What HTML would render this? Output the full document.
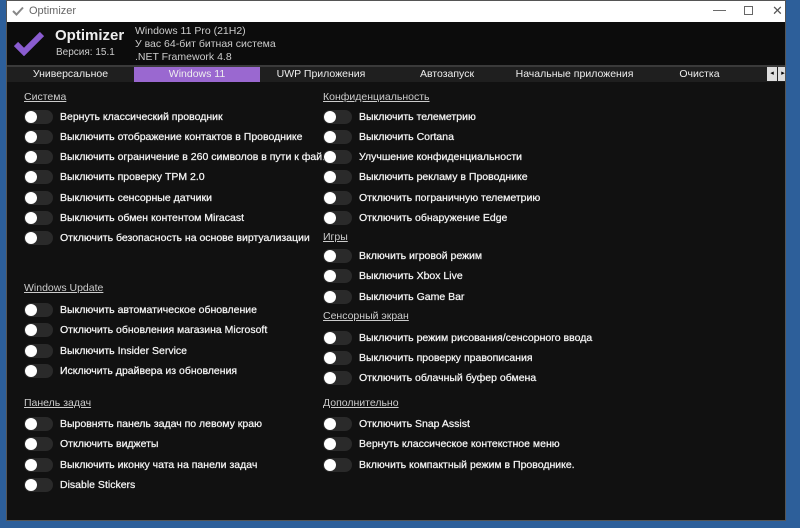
<!DOCTYPE html>
<html><head><meta charset="utf-8"><style>
*{margin:0;padding:0;box-sizing:border-box}
body{width:800px;height:528px;background:#2d5f9a;position:relative;overflow:hidden;font-family:"Liberation Sans","DejaVu Sans",sans-serif}
#win{position:absolute;left:6px;top:0;width:780px;height:521px;background:#111;border:1px solid #555;overflow:hidden}
#title{position:absolute;left:0;top:0;width:100%;height:21px;background:#fff;color:#666;font-size:11px}
#hdr{position:absolute;left:0;top:21px;width:100%;height:43px;background:#0c0c0c}
.t{position:absolute;color:#eee;white-space:nowrap}
#tabs{position:absolute;left:0;top:64px;width:100%;height:17px;background:#1f1f1f;border-top:2px solid #3a3a3a}
.tab{position:absolute;top:0;height:15px;line-height:14px;font-size:10.5px;color:#eee;text-align:center;white-space:nowrap}
.h{position:absolute;font-size:10.5px;color:#ccc;text-decoration:underline;white-space:nowrap}
.r{position:absolute;height:14px}
.r i{position:absolute;left:0;top:0;width:29px;height:14px;border-radius:7px;background:#2a2a2a}
.r b{position:absolute;left:1px;top:1px;width:12px;height:12px;border-radius:6px;background:#fff}
.r span{position:absolute;left:36px;top:0;line-height:14px;font-size:10.5px;color:#f4f4f4;white-space:nowrap;-webkit-text-stroke:0.25px #f4f4f4}
</style></head><body>
<div id="win">
<div id="title">
<svg style="position:absolute;left:5px;top:5px" width="12" height="10"><path d="M1 5 L4.5 8.5 L11 1.5" stroke="#888" stroke-width="2" fill="none"/></svg>
<span style="position:absolute;left:22px;top:4px">Optimizer</span>
<span style="position:absolute;left:706px;top:1px;font-size:13px;color:#555">—</span>
<span style="position:absolute;left:737px;top:5px;width:9px;height:9px;border:1px solid #666"></span>
<span style="position:absolute;left:765px;top:2px;font-size:13px;color:#555">✕</span>
</div>
<div id="hdr">
<svg style="position:absolute;left:6px;top:8px" width="32" height="26"><path d="M3 14 L11 22 L29 4" stroke="#8a5cd0" stroke-width="6" fill="none"/></svg>
<div class="t" style="left:48px;top:5px;font-size:15px;font-weight:bold">Optimizer</div>
<div class="t" style="left:49px;top:25px;font-size:10px;color:#ccc">Версия: 15.1</div>
<div class="t" style="left:128px;top:3px;font-size:10.5px;color:#ccc">Windows 11 Pro (21H2)</div>
<div class="t" style="left:128px;top:16px;font-size:10.5px;color:#ccc">У вас 64-бит битная система</div>
<div class="t" style="left:128px;top:29px;font-size:10.5px;color:#ccc">.NET Framework 4.8</div>
</div>
<div id="tabs">
<div class="tab" style="left:0;width:127px">Универсальное</div>
<div class="tab" style="left:127px;width:126px;background:#9a68d0">Windows 11</div>
<div class="tab" style="left:253px;width:122px">UWP Приложения</div>
<div class="tab" style="left:375px;width:130px">Автозапуск</div>
<div class="tab" style="left:505px;width:125px">Начальные приложения</div>
<div class="tab" style="left:630px;width:125px">Очистка</div>
<div style="position:absolute;left:760px;top:0;width:10px;height:14px;background:#ddd;font-size:7px;color:#000;text-align:center;line-height:14px">◂</div>
<div style="position:absolute;left:771px;top:0;width:10px;height:14px;background:#ddd;font-size:7px;color:#000;text-align:center;line-height:14px">▸</div>
</div>
<div class="h" style="left:17px;top:90px">Система</div>
<div class="r" style="left:17px;top:109px"><i></i><b></b><span>Вернуть классический проводник</span></div>
<div class="r" style="left:17px;top:129px"><i></i><b></b><span>Выключить отображение контактов в Проводнике</span></div>
<div class="r" style="left:17px;top:149px"><i></i><b></b><span>Выключить ограничение в 260 символов в пути к фай.</span></div>
<div class="r" style="left:17px;top:169px"><i></i><b></b><span>Выключить проверку TPM 2.0</span></div>
<div class="r" style="left:17px;top:190px"><i></i><b></b><span>Выключить сенсорные датчики</span></div>
<div class="r" style="left:17px;top:210px"><i></i><b></b><span>Выключить обмен контентом Miracast</span></div>
<div class="r" style="left:17px;top:230px"><i></i><b></b><span>Отключить безопасность на основе виртуализации</span></div>
<div class="h" style="left:17px;top:281px">Windows Update</div>
<div class="r" style="left:17px;top:302px"><i></i><b></b><span>Выключить автоматическое обновление</span></div>
<div class="r" style="left:17px;top:322px"><i></i><b></b><span>Отключить обновления магазина Microsoft</span></div>
<div class="r" style="left:17px;top:343px"><i></i><b></b><span>Выключить Insider Service</span></div>
<div class="r" style="left:17px;top:363px"><i></i><b></b><span>Исключить драйвера из обновления</span></div>
<div class="h" style="left:17px;top:396px">Панель задач</div>
<div class="r" style="left:17px;top:416px"><i></i><b></b><span>Выровнять панель задач по левому краю</span></div>
<div class="r" style="left:17px;top:436px"><i></i><b></b><span>Отключить виджеты</span></div>
<div class="r" style="left:17px;top:457px"><i></i><b></b><span>Выключить иконку чата на панели задач</span></div>
<div class="r" style="left:17px;top:477px"><i></i><b></b><span>Disable Stickers</span></div>

<div class="h" style="left:316px;top:90px">Конфиденциальность</div>
<div class="r" style="left:316px;top:109px"><i></i><b></b><span>Выключить телеметрию</span></div>
<div class="r" style="left:316px;top:129px"><i></i><b></b><span>Выключить Cortana</span></div>
<div class="r" style="left:316px;top:149px"><i></i><b></b><span>Улучшение конфиденциальности</span></div>
<div class="r" style="left:316px;top:169px"><i></i><b></b><span>Выключить рекламу в Проводнике</span></div>
<div class="r" style="left:316px;top:190px"><i></i><b></b><span>Отключить пограничную телеметрию</span></div>
<div class="r" style="left:316px;top:210px"><i></i><b></b><span>Отключить обнаружение Edge</span></div>
<div class="h" style="left:316px;top:230px">Игры</div>
<div class="r" style="left:316px;top:248px"><i></i><b></b><span>Включить игровой режим</span></div>
<div class="r" style="left:316px;top:268px"><i></i><b></b><span>Выключить Xbox Live</span></div>
<div class="r" style="left:316px;top:289px"><i></i><b></b><span>Выключить Game Bar</span></div>
<div class="h" style="left:316px;top:309px">Сенсорный экран</div>
<div class="r" style="left:316px;top:330px"><i></i><b></b><span>Выключить режим рисования/сенсорного ввода</span></div>
<div class="r" style="left:316px;top:350px"><i></i><b></b><span>Выключить проверку правописания</span></div>
<div class="r" style="left:316px;top:370px"><i></i><b></b><span>Отключить облачный буфер обмена</span></div>
<div class="h" style="left:316px;top:396px">Дополнительно</div>
<div class="r" style="left:316px;top:416px"><i></i><b></b><span>Отключить Snap Assist</span></div>
<div class="r" style="left:316px;top:436px"><i></i><b></b><span>Вернуть классическое контекстное меню</span></div>
<div class="r" style="left:316px;top:457px"><i></i><b></b><span>Включить компактный режим в Проводнике.</span></div>
</div>
</body></html>
